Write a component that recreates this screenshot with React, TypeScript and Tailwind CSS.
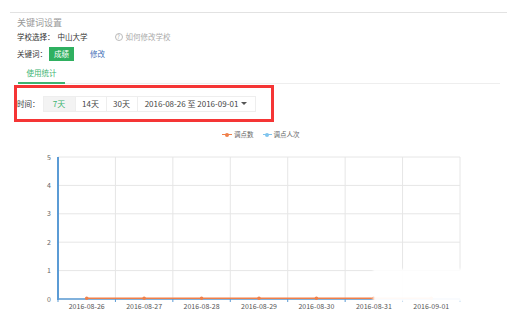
import React from "react";

const font = { fontFamily: '"Noto Sans CJK SC", "Noto Sans", sans-serif' };

function Chart() {
  const left = 58;
  const right = 460;
  const top = 13; // y=158
  const bottom = 155; // y=300
  const n = 7;
  const step = (right - left) / n;
  const dates = ["2016-08-26", "2016-08-27", "2016-08-28", "2016-08-29", "2016-08-30", "2016-08-31", "2016-09-01"];
  const rows = [5, 4, 3, 2, 1, 0];
  const rowH = (bottom - top) / 5;
  return (
    <svg width="507" height="168" viewBox="0 0 507 168" className="block">
      {rows.map((v, i) => {
        const y = top + i * rowH;
        return (
          <g key={v}>
            <line x1={left} x2={right} y1={y} y2={y} stroke="#e6e6e6" strokeWidth="1" />
            <text x={left - 7} y={y + 2.5} fontSize="7" fill="#666" textAnchor="end" style={font}>
              {v}
            </text>
          </g>
        );
      })}
      {Array.from({ length: n + 1 }).map((_, i) => {
        const x = left + i * step;
        return (
          <g key={i}>
            <line x1={x} x2={x} y1={top} y2={bottom} stroke="#e6e6e6" strokeWidth="1" />
            <line x1={x} x2={x} y1={bottom} y2={bottom + 3} stroke="#5b9bd5" strokeWidth="1" />
          </g>
        );
      })}
      <line x1={left} x2={left} y1={top} y2={bottom + 1} stroke="#5b9bd5" strokeWidth="2" />
      <line x1={left} x2={right} y1={bottom} y2={bottom} stroke="#5b9bd5" strokeWidth="1.5" />
      <line x1={left + step / 2} x2={left + step * 6.5} y1={bottom - 0.8} y2={bottom - 0.8} stroke="#f0804a" strokeWidth="1.5" />
      {dates.map((d, i) => {
        const x = left + step * (i + 0.5);
        return (
          <g key={d}>
            <circle cx={x} cy={bottom - 0.8} r="1.8" fill="#f0804a" />
            <text x={x} y={bottom + 10} fontSize="7" fill="#555" textAnchor="middle" style={font}>
              {d}
            </text>
          </g>
        );
      })}
    </svg>
  );
}

export default function App() {
  return (
    <div className="relative w-[507px] h-[313px] overflow-hidden bg-white text-[#333]" style={font}>
      <div className="ml-[10px] mt-[12px] border-t border-[#e2e2e2]">
        <div className="pl-[7px] pt-[3px] text-[9px] leading-[14px] text-[#999]">关键词设置</div>
        <div className="pl-[7px] mt-[1px] flex items-center text-[7.5px] leading-[12px] text-[#333]">
          <span>学校选择：</span>
          <span className="ml-[3px]">中山大学</span>
          <span className="ml-[27px] flex items-center text-[#aaa]">
            <span className="w-[8px] h-[8px] rounded-full border border-[#bbb] text-[6px] leading-[6px] flex items-center justify-center mr-[3px]">?</span>
            如何修改学校
          </span>
        </div>
        <div className="pl-[7px] mt-[4px] flex items-center text-[7.5px] text-[#333]">
          <span>关键词：</span>
          <span className="ml-[2px] w-[25px] h-[14px] bg-[#2fb060] text-white flex items-center justify-center text-[7.5px]">成绩</span>
          <span className="ml-[16px] text-[#3d6fb6]">修改</span>
        </div>
        <div className="mt-[6px] flex items-end">
          <div className="ml-[8px] w-[47px] pb-[3px] border-b-2 border-[#3cb371] text-center text-[7.5px] leading-[12px] text-[#3cb371]">
            使用统计
          </div>
          <div className="flex-1 mr-[7px] border-b border-[#eee]" />
        </div>
      </div>
      <div className="ml-[14px] mt-[1px] w-[260px] h-[37px] border-[3px] border-[#f53535] flex items-center">
        <span className="text-[7.5px] text-[#333] ml-[0px]">时间：</span>
        <div className="ml-[3px] flex h-[16px] bg-[#eeeeee] gap-px p-px">
          <span className="w-[31px] bg-[#f3f3f3] text-[#3cb371] text-[8px] flex items-center justify-center">7天</span>
          <span className="w-[30px] bg-white text-[8px] text-[#444] flex items-center justify-center">14天</span>
          <span className="w-[30px] bg-white text-[8px] text-[#444] flex items-center justify-center">30天</span>
          <span className="w-[117px] bg-white text-[8px] text-[#444] flex items-center justify-center">
            2016-08-26 至 2016-09-01
            <span className="ml-[3px] w-0 h-0 border-l-[3px] border-r-[3px] border-t-[3px] border-l-transparent border-r-transparent border-t-[#555]" />
          </span>
        </div>
      </div>
      <div className="mt-[8px] flex items-center text-[6.5px] text-[#666]">
        <span className="ml-[222px] relative w-[10px] h-[5px] flex items-center justify-center">
          <span className="absolute left-0 right-0 top-[2px] h-px bg-[#f0804a]" />
          <span className="w-[4px] h-[4px] rounded-full bg-[#f0804a]" />
        </span>
        <span className="ml-[2px]">调点数</span>
        <span className="ml-[9px] relative w-[9px] h-[5px] flex items-center justify-center">
          <span className="absolute left-0 right-0 top-[2px] h-px bg-[#7fc4ee]" />
          <span className="w-[4px] h-[4px] rounded-full bg-[#7fc4ee]" />
        </span>
        <span className="ml-[2px]">调点人次</span>
      </div>
      <div className="mt-[4px]">
        <Chart />
      </div>
      <div className="absolute left-[373px] top-[269px] w-[125px] h-[33px] bg-white/95 blur-[1px]" />
    </div>
  );
}
